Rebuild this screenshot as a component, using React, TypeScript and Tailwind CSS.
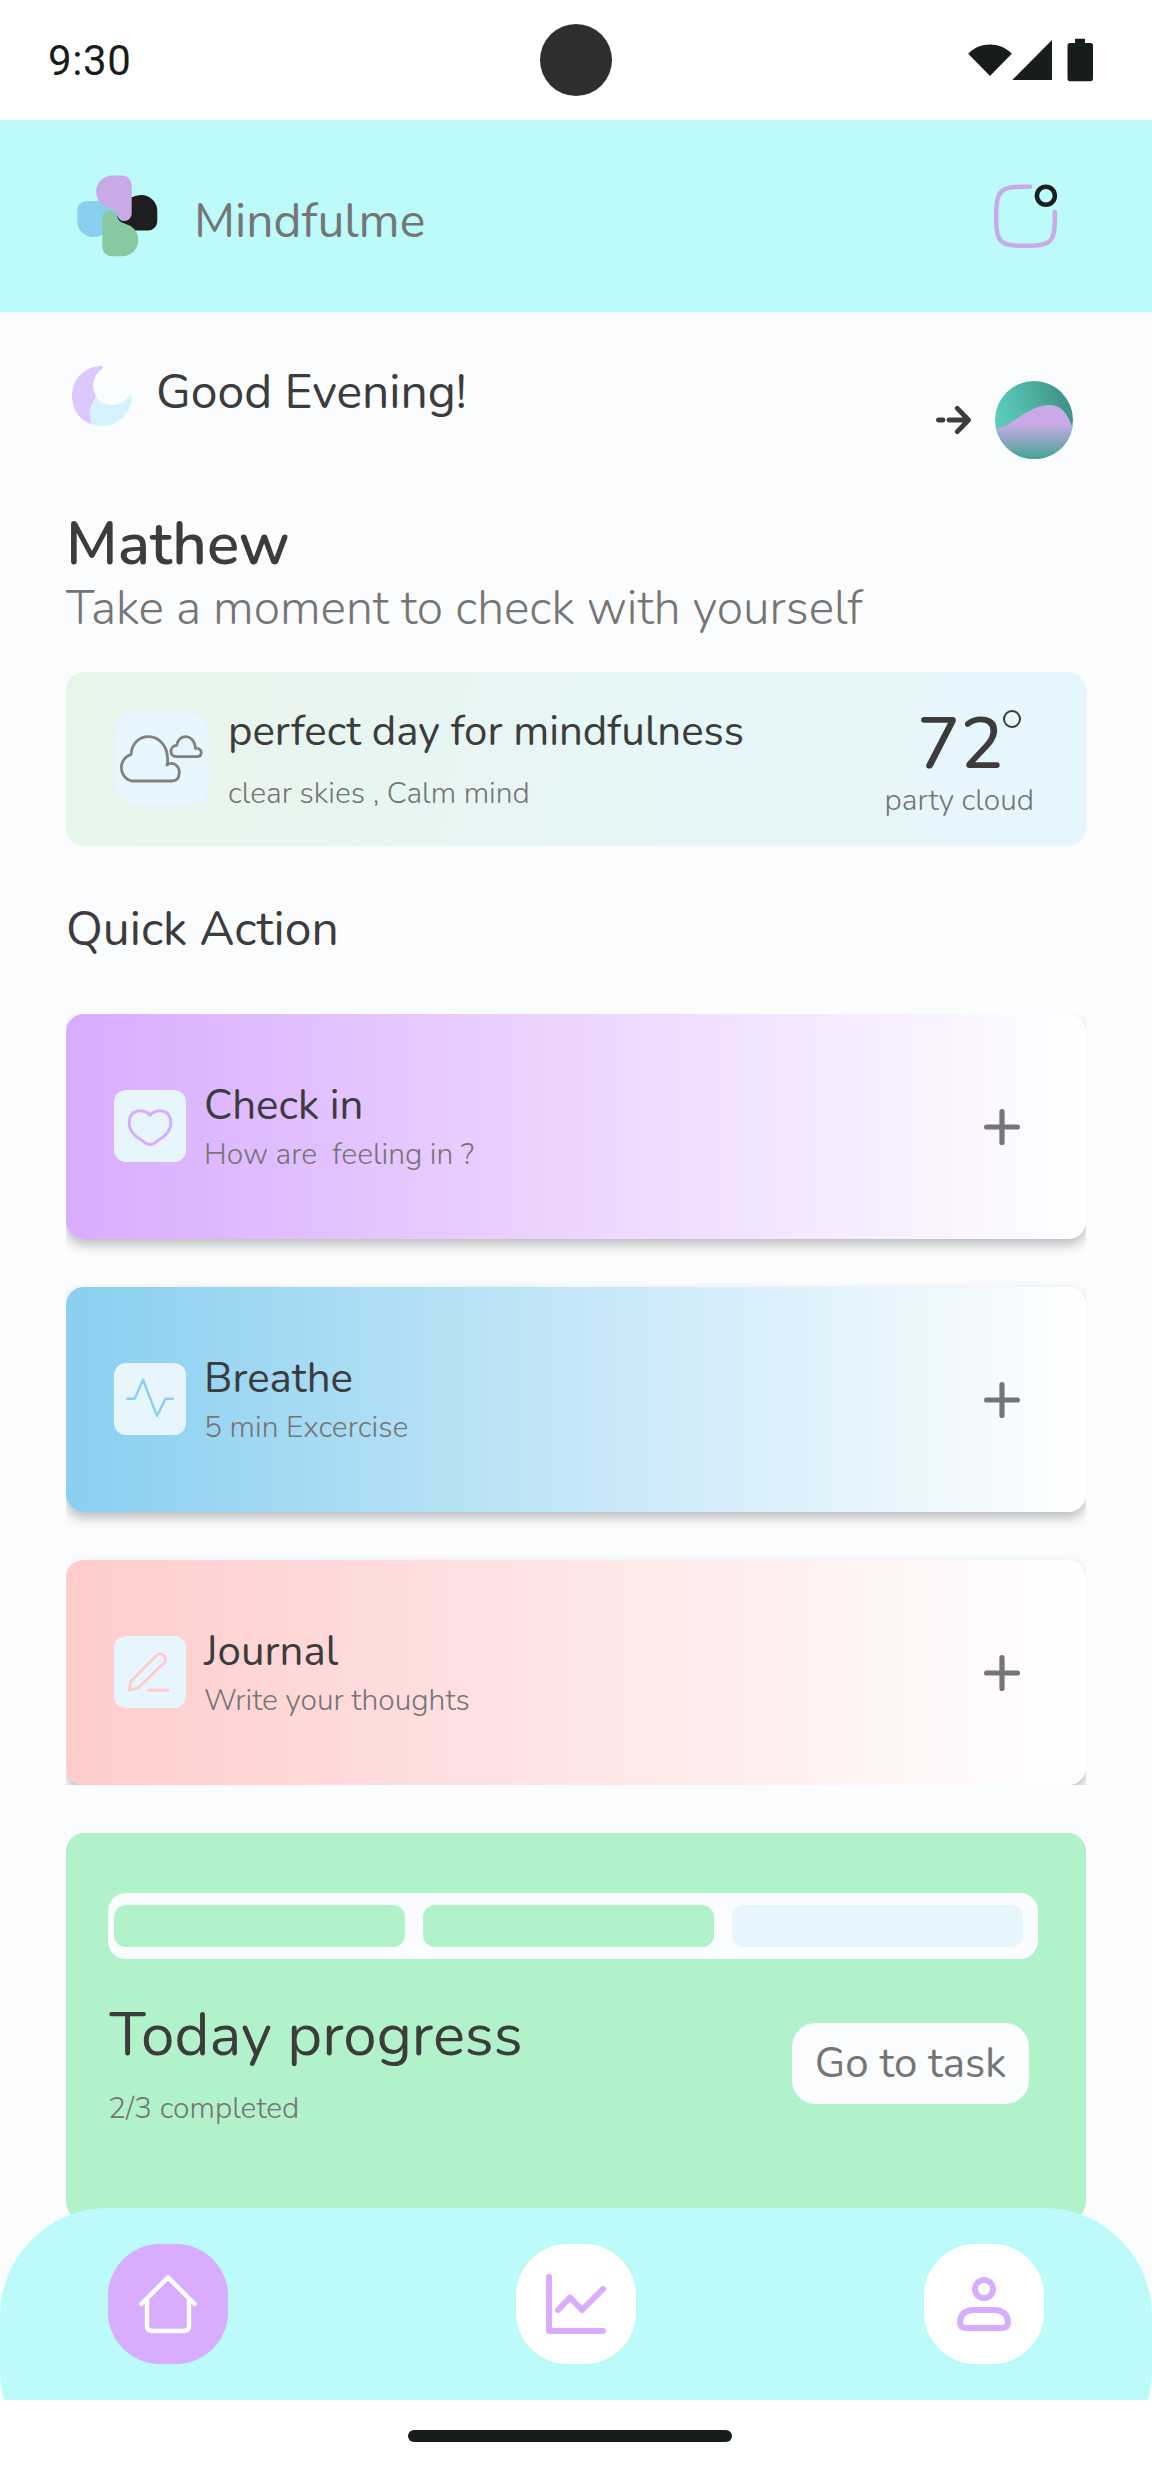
import React from 'react';

function StatusBar() {
  return (
    <div className="flex h-[120px] items-center justify-between bg-white pl-12 pr-[58px]">
      <span className="mt-[2px] w-[92px] font-['Roboto'] text-[42px] leading-[60px] tracking-[0.6px] text-[#171d1b]">9:30</span>
      <div className="ml-[44px] size-[72px] rounded-full bg-[#2e2e2e]" />
      <svg className="h-[44px] w-[126px]" viewBox="968 38 126 44" fill="#171d1b">
        <path d="M968.2 53.7C980 41.5 1000 41.5 1011.8 53.7L990 76Z" />
        <path d="M1012.3 80H1052V40Z" />
        <path d="M1075 38.7h10v4.3h5.4a2.6 2.6 0 0 1 2.6 2.6v33a2.6 2.6 0 0 1-2.6 2.6h-20.3a2.6 2.6 0 0 1-2.6-2.6v-33a2.6 2.6 0 0 1 2.6-2.6h4.9z" />
      </svg>
    </div>
  );
}

function Logo() {
  return (
    <svg className="size-[84px]" viewBox="75 174 84 84">
      <path fill="#89cff0" d="M86.500 201H108L117 209V222L103 234.500Q98 237 93 237A16 16 0 0 1 77.200 221V210.300A9.300 9.300 0 0 1 86.500 201Z" />
      <path fill="#1e1e1e" d="M131 197.500Q136 195 141.300 195A16 16 0 0 1 157.300 211V221A9.400 9.400 0 0 1 148 230.500H130Q117 227 117 216Z" />
      <path fill="#88c9a1" d="M102.300 218A7.300 7.300 0 0 1 109.600 210.500Q116 210.500 117.500 217.500Q118.500 221.500 124.500 223.500Q138.200 227.500 138.200 240A16 16 0 0 1 122.200 256.300H111.700A9.400 9.400 0 0 1 102.300 247Z" />
      <path fill="#c9a9e6" d="M131.700 213.500A7.300 7.300 0 0 1 124.400 221.100Q118.500 221.100 116.800 214.500Q115.500 209.500 109.500 207.700Q96.200 203.500 96.200 191.700A16 16 0 0 1 112.200 175.500H122.300A9.400 9.400 0 0 1 131.700 185Z" />
    </svg>
  );
}

function Header() {
  return (
    <header className="flex h-[192px] items-center bg-[#bdfafa] pl-[75px] pr-[92px]">
      <Logo />
      <h1 className="ml-[35px] mt-[10px] flex-1 text-[48px] leading-[66px] text-[#757575]">Mindfulme</h1>
      <svg className="size-[68px]" viewBox="992 181 68 68" fill="none">
        <path d="M1030 185.700H1022C1001 185.700 996.200 190.500 996.200 211V220C996.200 240.500 1001 244.800 1022 244.800H1029C1050 244.800 1054.800 240.500 1054.800 220V211" stroke="#c9a9e6" strokeWidth="4.500" strokeLinecap="round" />
        <circle cx="1045.900" cy="194.700" r="9" stroke="#1e1e1e" strokeWidth="4.500" />
      </svg>
    </header>
  );
}

function Greeting() {
  return (
    <section>
      <div className="flex h-[99px] items-start justify-between">
        <div className="flex items-start gap-[18px]">
          <svg className="size-[72px]" viewBox="66 360 72 72">
            <path fill="#dcc8ff" d="M101 366C103.500 365.800 103.500 368 101.800 369.300C93 375.500 90.500 387 96.300 397C89 406 89 415 92 424.500C78 419.500 72 408 72 396C72 380 84 366.500 101 366Z" />
            <path fill="#d5f2ff" d="M96.300 397C103 407.500 121 408.500 129 396C130 394.200 132 394.500 132 396.500C131.500 413 118.500 426 102 426Q97 426 92 424.500C89 415 89.500 406 96.300 397Z" />
          </svg>
          <p className="-mt-px text-[48px] leading-[66px] text-[#3c3c3c]">Good Evening!</p>
        </div>
        <div className="mr-[13.5px] mt-[21px] flex items-center gap-[24px]">
          <svg className="h-[36px] w-[36px]" viewBox="934 402 36 36" fill="none" stroke="#3c3c3c" strokeWidth="4.800" strokeLinecap="round" strokeLinejoin="round">
            <path d="M937.400 420h4.600M948 420h19.300M956.300 408.300L967.500 420L956.300 431.700" />
          </svg>
          <svg className="size-[78px]" viewBox="0 0 78 78">
            <defs>
              <linearGradient id="sky" x1="0.050" y1="0.650" x2="0.950" y2="0.400">
                <stop offset="0" stopColor="#5bcebd" />
                <stop offset="0.400" stopColor="#53baab" />
                <stop offset="1" stopColor="#409488" />
              </linearGradient>
              <linearGradient id="hill" x1="0" y1="0" x2="0" y2="1">
                <stop offset="0.350" stopColor="#c9a9e6" />
                <stop offset="0.950" stopColor="#4ca498" />
              </linearGradient>
            </defs>
            <circle cx="39" cy="39" r="39" fill="url(#sky)" />
            <path fill="url(#hill)" d="M0.800 45.500C4 48 9 46.500 19 39.500C31 31 43 24 54 24C66 24 71.500 31 77.600 46.500A39 39 0 0 1 0.800 45.500Z" />
          </svg>
        </div>
      </div>
      <h2 className="mt-[49px] text-[60px] font-semibold leading-[72px] text-[#3c3c3c]">Mathew</h2>
      <p className="text-[48px] font-light leading-[56px] text-[#757575]">Take a moment to check with yourself</p>
    </section>
  );
}

function WeatherCard() {
  return (
    <section className="mt-9 flex h-[174px] items-center rounded-[18px] bg-[linear-gradient(100deg,#e8f5e9,#e7f6f6_50%,#e6f6fe)] pl-12 pr-[52px]">
      <div className="flex size-[96px] items-center justify-center rounded-[24px] border border-[#ebeff8] bg-[#e7f6fd]">
        <svg className="-ml-[4px] h-[54px] w-[90px]" viewBox="117 730 90 54" fill="none" stroke="#808080" strokeWidth="2.800" strokeLinejoin="round">
          <path d="M133.500 779A12.500 13.500 0 0 1 133 752.600C135 727 169 729 169.600 757Q169.800 760 169 763C175 759 181.300 763.500 181.300 770.500Q181.300 779 173.500 779Z" />
          <path d="M178.500 754.700C170.500 754.700 171.500 743.500 178.800 743.300C180.500 731 196.500 731.500 197.500 746.500C200.500 746 203.200 747.500 203.200 750.500Q203.200 754.700 199 754.700Z" />
        </svg>
      </div>
      <div className="ml-[18px] mt-[2px] flex flex-1 flex-col gap-[14px]">
        <p className="text-[42px] leading-[54px] text-[#3c3c3c]">perfect day for mindfulness</p>
        <p className="text-[30px] font-light leading-[42px] text-[#757575]">clear skies , Calm mind</p>
      </div>
      <div className="mt-[12px] flex flex-col items-center">
        <div className="ml-[20px] flex text-[72px] font-medium leading-[72px] text-[#3c3c3c]">
          72
          <span className="mt-[2px] size-[18px] rounded-full border-2 border-[#3c3c3c]" />
        </div>
        <p className="text-[30px] font-light leading-[42px] text-[#757575]">party cloud</p>
      </div>
    </section>
  );
}

type Action = { title: string; note: string; gradient: string; icon: React.ReactNode };

const actions: Action[] = [
  {
    title: 'Check in',
    note: 'How are  feeling in ?',
    gradient: 'bg-[linear-gradient(90deg,#d8acff,#ffffff)]',
    icon: (
      <path stroke="#d8acff" strokeWidth="3" d="M36 25.300C31 18.500 15.200 18 15.200 33C15.200 43.500 25 48.500 31.500 53Q36 56 40.500 53C47 48.500 56.800 43.500 56.800 33C56.800 18 41 18.500 36 25.300Z" />
    ),
  },
  {
    title: 'Breathe',
    note: '5 min Excercise',
    gradient: 'bg-[linear-gradient(90deg,#89cff0,#ffffff)]',
    icon: <path stroke="#89cff0" strokeWidth="2.400" d="M13.300 35.700H20.700L29 16.700L43 53L51.500 35.700H58.800" />,
  },
  {
    title: 'Journal',
    note: 'Write your thoughts',
    gradient: 'bg-[linear-gradient(90deg,#ffcccc,#ffffff)]',
    icon: (
      <path stroke="#ffcccc" strokeWidth="2.900" d="M15 54.300L17.200 45L42.300 19.800C47.500 15 54.500 21 50 26.800L24.500 51.800ZM34.500 54.300H54" />
    ),
  },
];

function ActionCard({ title, note, gradient, icon }: Action) {
  return (
    <div className={`flex h-[225px] shrink-0 items-center rounded-[18px] pb-px pl-12 pr-[66px] shadow-[0_6px_12px_rgba(0,0,0,0.25)] ${gradient}`}>
      <svg className="size-[72px] rounded-[12px] bg-[#e7f6fd]" viewBox="0 0 72 72" fill="none" strokeLinecap="round" strokeLinejoin="round">
        {icon}
      </svg>
      <div className="ml-[18px] mt-[3px] flex flex-1 flex-col gap-px">
        <h4 className="text-[42px] leading-[54px] text-[#3c3c3c]">{title}</h4>
        <p className="whitespace-pre text-[30px] font-light leading-[42px] text-[#757575]">{note}</p>
      </div>
      <svg className="mt-px size-[36px]" viewBox="0 0 36 36" stroke="#757575" strokeWidth="5.200" strokeLinecap="round">
        <path d="M2.600 18H33.400M18 2.600V33.400" />
      </svg>
    </div>
  );
}

function Progress() {
  return (
    <section className="mt-12 h-[387px] rounded-[18px] bg-[#b2f2cb] px-[42px] pt-[60px]">
      <div className="flex h-[66px] w-[930px] items-center gap-[18px] rounded-[18px] bg-[#fbfcfe] pl-1.5">
        <div className="h-[42px] w-[291px] rounded-[12px] bg-[#b2f2cb]" />
        <div className="h-[42px] w-[291px] rounded-[12px] bg-[#b2f2cb]" />
        <div className="h-[42px] w-[291px] rounded-[12px] bg-[#e7f6fd]" />
      </div>
      <div className="mt-[36px] flex items-center justify-between pr-[15px]">
        <div className="flex flex-col gap-[13px]">
          <h3 className="pl-[1.5px] text-[60px] leading-[80px] text-[#3c3c3c]">Today progress</h3>
          <p className="text-[30px] font-light leading-[42px] text-[#757575]">2/3 completed</p>
        </div>
        <button className="mt-[2px] h-[81px] w-[237px] rounded-[24px] bg-[#fbfcfe] pt-px text-center text-[42px] leading-[80px] text-[#757575]">Go to task</button>
      </div>
    </section>
  );
}

function BottomNav() {
  return (
    <div className="relative -mt-3 h-[192px] overflow-hidden">
      <nav className="flex h-[271px] items-start justify-between rounded-[108px] bg-[#bdfafa] px-[108px] pt-9">
        <button className="size-[120px] rounded-[52px] bg-[#d8acff]">
          <svg className="size-full" viewBox="0 0 120 120" fill="none" stroke="#ffffff" strokeWidth="4.500" strokeLinecap="round" strokeLinejoin="round">
            <path d="M33.300 60L60 33.300L86.700 60M39 54.500V81.500Q39 87 44.500 87H75.500Q81 87 81 81.500V54.500" />
          </svg>
        </button>
        <button className="size-[120px] rounded-[52px] bg-white">
          <svg className="size-full" viewBox="0 0 120 120" fill="none" stroke="#d8acff" strokeWidth="6" strokeLinecap="round" strokeLinejoin="round">
            <path d="M33 33V87H87M42 66L54 53.500L66 66L87 45" />
          </svg>
        </button>
        <button className="size-[120px] rounded-[52px] bg-white">
          <svg className="size-full" viewBox="0 0 120 120" fill="none" stroke="#d8acff" strokeWidth="6">
            <circle cx="60" cy="45" r="9" />
            <path d="M50 66H70Q84 66.500 84 78.500Q84 84 78 84H42Q36 84 36 78.500Q36 66.500 50 66Z" />
          </svg>
        </button>
      </nav>
    </div>
  );
}

export default function App() {
  return (
    <div className="flex h-[2472px] w-[1152px] flex-col overflow-hidden bg-[#fbfcfe] font-['Nunito','Open_Sans',sans-serif]">
      <StatusBar />
      <Header />
      <main className="px-[66px] pt-12">
        <Greeting />
        <WeatherCard />
        <h3 className="mt-[50px] text-[48px] leading-[66px] text-[#3c3c3c]">Quick Action</h3>
        <div className="mt-[52px] flex h-[771px] flex-col gap-12 overflow-hidden">
          {actions.map((a) => (
            <ActionCard key={a.title} {...a} />
          ))}
        </div>
        <Progress />
      </main>
      <BottomNav />
      <div className="flex h-[72px] items-center bg-white pl-[408px]">
        <div className="h-3 w-[324px] rounded-full bg-[#171d1b]" />
      </div>
    </div>
  );
}
